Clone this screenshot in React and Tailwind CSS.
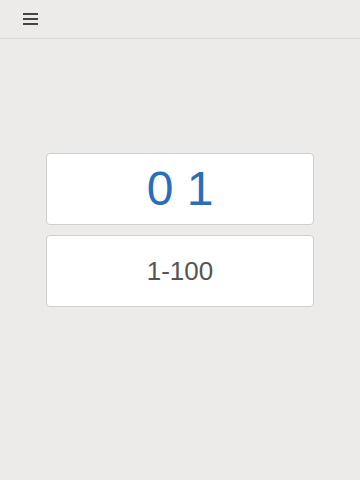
export default function App() {
  return (
    <div className="w-[360px] h-[480px] bg-[#ecebe9] flex flex-col" style={{ fontFamily: '"Liberation Sans", Arial, sans-serif' }}>
      <div className="h-[39px] border-b border-[#d9d8d6] flex items-center px-[23px] shrink-0">
        <div className="flex flex-col gap-[3px]">
          <div className="w-[15px] h-[2px] bg-[#444]" />
          <div className="w-[15px] h-[2px] bg-[#444]" />
          <div className="w-[15px] h-[2px] bg-[#444]" />
        </div>
      </div>
      <div className="flex flex-col items-center pt-[114px] gap-[10px]">
        <div className="w-[268px] h-[72px] bg-white border border-[#cfcfcf] rounded-[4px] flex items-center justify-center text-[48px] text-[#2a6ebb]">
          0 1
        </div>
        <div className="w-[268px] h-[72px] bg-white border border-[#cfcfcf] rounded-[4px] flex items-center justify-center text-[26px] text-[#555]">
          1-100
        </div>
      </div>
    </div>
  );
}
